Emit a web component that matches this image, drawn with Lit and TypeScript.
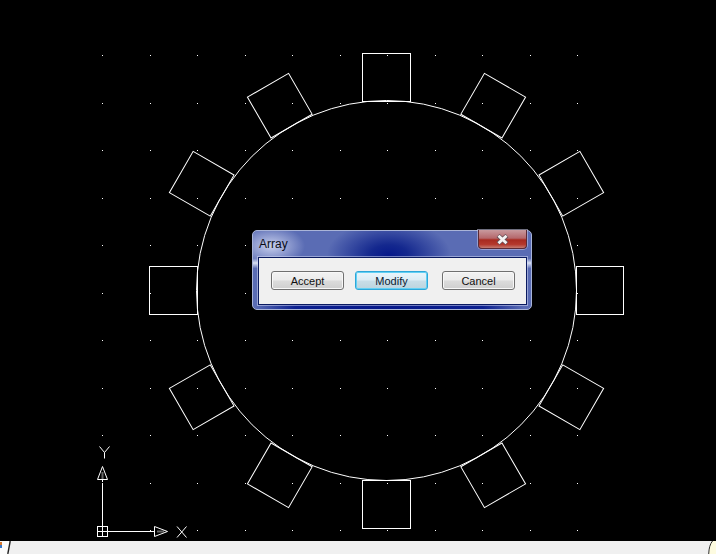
import { LitElement, html, css, svg } from "lit";
import { customElement } from "lit/decorators.js";

const GX = [102, 150, 197, 245, 292, 340, 387, 435, 482, 530, 577];
const GY = [55, 103, 150, 198, 245, 293, 340, 388, 435, 483, 530];
const ROTATED = [30, 60, 120, 150, 210, 240, 300, 330];
const STRAIGHT = [
  [362.5, 53.5, 48, 48],
  [362.5, 480.5, 48, 48],
  [149.5, 266.5, 48, 48],
  [576.5, 266.5, 47, 48],
];

@customElement("app-root")
export class AppRoot extends LitElement {
  static styles = css`
    :host { display: flex; flex-direction: column; width: 716px; height: 554px; background: #000; overflow: hidden; font-family: "Liberation Sans", Arial, sans-serif; }
    .canvas { position: relative; flex: 1; background: #000; }
    .drawing { display: block; position: absolute; left: 0; top: 0; }
    .dialog {
      position: absolute; left: 252px; top: 230px; width: 280px; height: 80px; box-sizing: border-box;
      border: 1px solid #a9b4d8; border-radius: 5px; padding: 0 4px 4px 5px;
      display: flex; flex-direction: column;
      background:
        radial-gradient(ellipse 34px 20px at 18px 15px, rgba(205,212,240,.95), rgba(190,198,232,0)),
        linear-gradient(to bottom, rgba(255,255,255,0) 35%, rgba(232,238,252,.9) 41%, rgba(255,255,255,0) 48%),
        radial-gradient(ellipse 62px 34px at 136px 24px, #06188a 0%, #14288e 30%, rgba(87,104,176,0) 100%),
        radial-gradient(ellipse 135px 22px at 136px 78px, #06188a 0%, #0c2090 70%, rgba(87,104,176,0) 100%),
        #5a6cb4;
    }
    .titlebar { height: 26px; display: flex; align-items: flex-start; justify-content: space-between; box-sizing: border-box; }
    .title { font-size: 12px; line-height: 14px; color: #0a0c16; margin: 6px 0 0 1px; }
    .close {
      width: 49px; height: 19px; margin-top: -1px; box-sizing: border-box;
      border: 1px solid #5a2a36; border-top: none; border-radius: 0 0 4px 4px;
      box-shadow: 0 0 0 1px rgba(200,200,230,.55);
      background: linear-gradient(to bottom, #c99a9e 0%, #b5686c 45%, #a82a20 55%, #b4382c 80%, #c47a70 100%);
      display: flex; align-items: center; justify-content: center;
    }
    .close svg { display: block; }
    .panel {
      flex: 1; background: #f0f0f0; border: 1px solid #0a1a60; box-sizing: border-box;
      outline: 1px solid rgba(215,222,245,.5);
      display: flex; gap: 11px; padding: 13px 0 0 12px;
    }
    .btn {
      width: 73px; height: 19px; box-sizing: border-box; border: 1px solid #707070; border-radius: 3px;
      background: linear-gradient(to bottom, #f2f2f2 0%, #ebebeb 48%, #dcdcdc 52%, #cfcfcf 100%);
      box-shadow: inset 0 0 0 1px #f8f8f8;
      font-size: 11px; line-height: 18px; text-align: center; color: #101010;
    }
    .btn.focus {
      border-color: #2ea6d8;
      background: linear-gradient(to bottom, #eaf6fc 0%, #dcecf4 48%, #c8dee8 52%, #bcd4de 100%);
      box-shadow: inset 0 0 0 1px #62d0f4;
      color: #0a1a30;
    }
    .btn.last { margin-left: 3px; }
    .status { height: 13px; background: #f0f0f0; flex: none; display: flex; align-items: stretch; justify-content: space-between; }
    .status svg { display: block; }
  `;

  private drawing() {
    const dots = GX.flatMap((x) => GY.map((y) => svg`<rect x=${x} y=${y} width="1" height="1" fill="#fff"></rect>`));
    const rotated = ROTATED.map(
      (a) => svg`<rect x="362.75" y="53.5" width="47.5" height="47.2" fill="none" stroke="#fff" stroke-width="1"
        transform="rotate(${a} 386.5 290.5)"></rect>`
    );
    const straight = STRAIGHT.map(
      ([x, y, w, h]) => svg`<rect x=${x} y=${y} width=${w} height=${h} fill="none" stroke="#fff" stroke-width="1" shape-rendering="crispEdges"></rect>`
    );
    return html`<svg class="drawing" width="716" height="541" viewBox="0 0 716 541">
      ${dots}
      <circle cx="386.5" cy="290.5" r="190" fill="none" stroke="#fff" stroke-width="1"></circle>
      ${rotated}
      ${straight}
      <g fill="none" stroke="#fff" stroke-width="1" shape-rendering="crispEdges">
        <path d="M102.5 484V526M102.5 480V482"></path>
        <path d="M108 531.5H155"></path>
        <rect x="97.5" y="526.5" width="10" height="10"></rect>
        <path d="M102.5 527V536M98 531.5H107"></path>
      </g>
      <g fill="none" stroke="#fff" stroke-width="1">
        <path d="M102.5 472V479" stroke="#666" stroke-width="2"></path>
        <path d="M157 531.5H164" stroke="#666" stroke-width="2"></path>
        <path d="M102.5 466.5L97.5 479.5H107.5Z"></path>
        <path d="M154.5 526.5L167.5 531.5L154.5 536.5Z"></path>
        <path d="M99.5 446.5L104.5 452.5L109.5 446.5M104.5 452.5V458.5"></path>
        <path d="M177 526.5L186.5 537.5M186.5 526.5L177 537.5"></path>
      </g>
    </svg>`;
  }

  render() {
    return html`
      <div class="canvas">
        ${this.drawing()}
        <div class="dialog">
          <div class="titlebar">
            <div class="title">Array</div>
            <div class="close">
              <svg width="13" height="11" viewBox="0 0 13 11">
                <path d="M2 1.5L11 9.5M11 1.5L2 9.5" stroke="#6a5058" stroke-width="4.4" fill="none"></path>
                <path d="M2.5 1.8L10.5 9.2M10.5 1.8L2.5 9.2" stroke="#f4f2f2" stroke-width="2.8" fill="none"></path>
              </svg>
            </div>
          </div>
          <div class="panel">
            <div class="btn">Accept</div>
            <div class="btn focus">Modify</div>
            <div class="btn last">Cancel</div>
          </div>
        </div>
      </div>
      <div class="status">
        <svg width="12" height="13" viewBox="0 0 12 13">
          <rect width="9" height="13" fill="#fbfbfb"></rect>
          <rect x="0" y="1" width="2" height="3" fill="#d8762c"></rect>
          <rect x="0" y="4" width="2" height="3" fill="#3a78c8"></rect>
          <path d="M10.2 0L7.8 13" stroke="#202020" stroke-width="1.4" fill="none"></path>
        </svg>
        <svg width="8" height="13" viewBox="0 0 8 13">
          <path d="M0.7 13C1 7 2 3 4.5 0H8V13Z" fill="#fdfbe0"></path>
          <path d="M0.7 13C1 7 2 3 4.5 0" fill="none" stroke="#303030" stroke-width="1"></path>
        </svg>
      </div>
    `;
  }
}
